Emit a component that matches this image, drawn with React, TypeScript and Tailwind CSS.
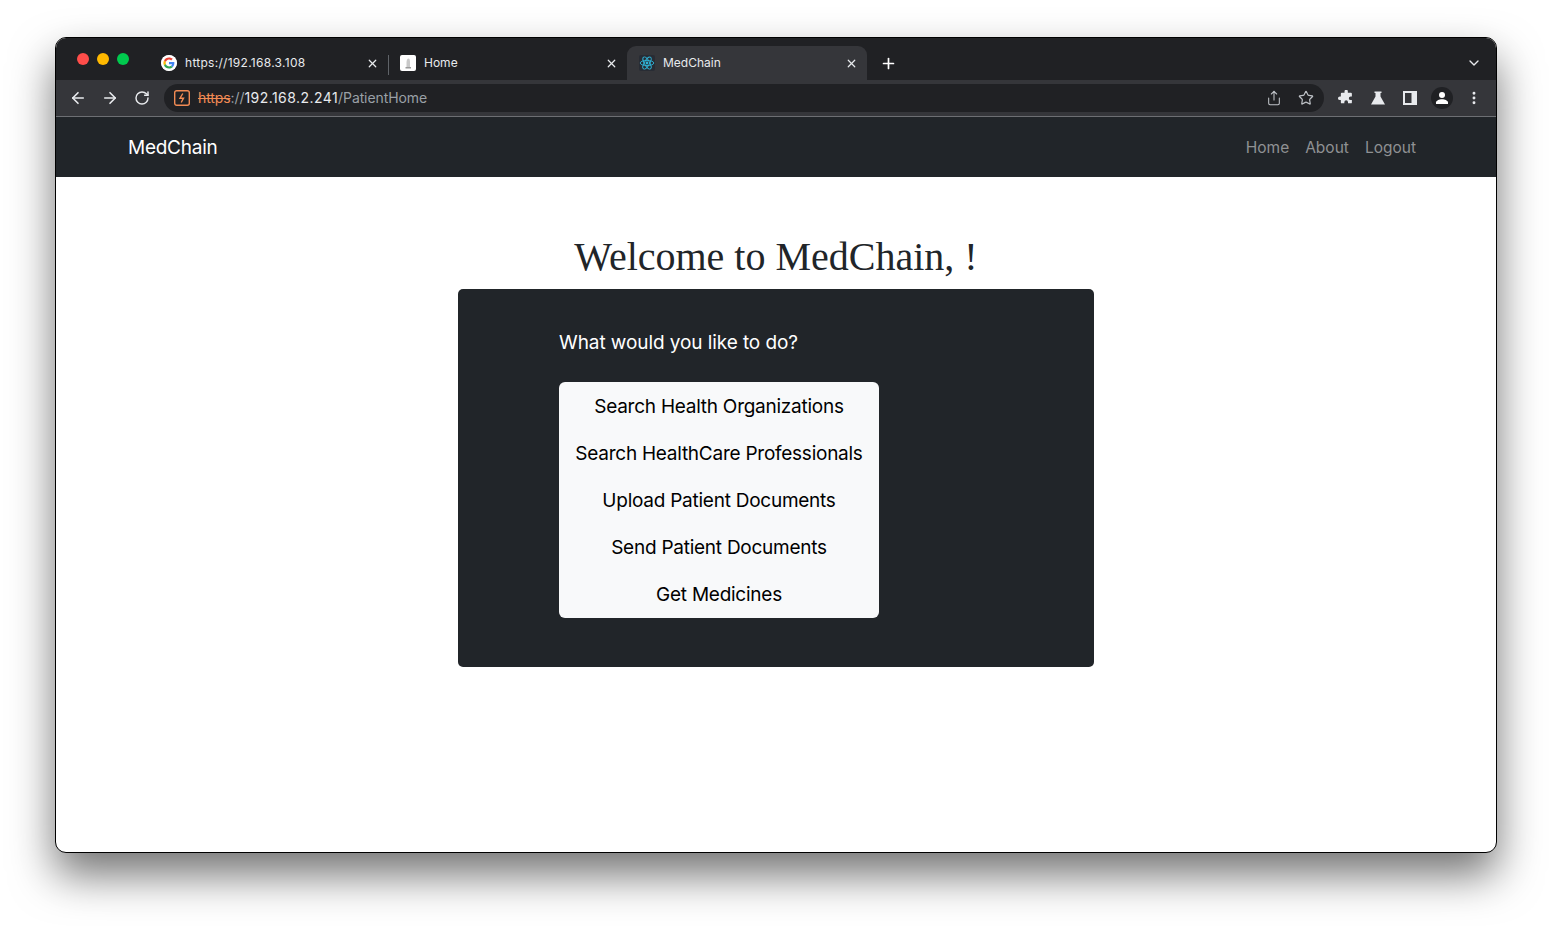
import { ArrowLeft, ArrowRight, ChevronDown, MoreVertical, Plus, RotateCw, Share, Star, X } from "lucide-react"

const ui = "font-['Inter',sans-serif]"

const menuItems = [
  "Search Health Organizations",
  "Search HealthCare Professionals",
  "Upload Patient Documents",
  "Send Patient Documents",
  "Get Medicines",
]

const GoogleIcon = () => (
  <svg width="16" height="16" viewBox="0 0 48 48" className="rounded-full bg-white">
    <circle cx="24" cy="24" r="24" fill="#fff" />
    <g transform="translate(7.2 7.2) scale(.7)">
      <path fill="#EA4335" d="M24 9.5c3.5 0 6.7 1.2 9.2 3.600l6.900-6.900C35.900 2.400 30.400 0 24 0 14.600 0 6.500 5.400 2.600 13.200l8 6.200C12.500 13.600 17.800 9.500 24 9.500z" />
      <path fill="#4285F4" d="M47 24.500c0-1.600-.1-3.100-.4-4.500H24v9h12.900c-.6 3-2.200 5.500-4.700 7.200l7.700 6C44.400 38.100 47 31.900 47 24.500z" />
      <path fill="#FBBC05" d="M10.600 28.600c-.5-1.400-.8-3-.8-4.600s.3-3.200.8-4.600l-8-6.200C1 16.500 0 20.100 0 24s1 7.500 2.600 10.800l8-6.200z" />
      <path fill="#34A853" d="M24 48c6.500 0 11.900-2.100 15.900-5.800l-7.700-6c-2.100 1.400-4.900 2.300-8.200 2.300-6.200 0-11.500-4.200-13.400-9.800l-8 6.200C6.500 42.600 14.600 48 24 48z" />
    </g>
  </svg>
)

const HomeFavicon = () => (
  <svg width="16" height="16" viewBox="0 0 16 16">
    <rect width="16" height="16" rx="2" fill="#fff" />
    <path d="M6.500 12.500V7.500C6.500 5 7.500 3.500 8.500 3.500S10 5 10 7.500v5z" fill="#c9c9c9" />
    <rect x="5.500" y="12" width="5.500" height="1.500" fill="#9a9a9a" />
  </svg>
)

const ReactFavicon = () => (
  <svg width="16" height="16" viewBox="0 0 16 16">
    <rect width="16" height="16" rx="2" fill="#282c34" />
    <circle cx="8" cy="8" r="1.400" fill="#2fb4d8" />
    <g fill="none" stroke="#2fb4d8" strokeWidth=".9">
      <ellipse cx="8" cy="8" rx="6.800" ry="2.600" />
      <ellipse cx="8" cy="8" rx="6.800" ry="2.600" transform="rotate(60 8 8)" />
      <ellipse cx="8" cy="8" rx="6.800" ry="2.600" transform="rotate(120 8 8)" />
    </g>
  </svg>
)

const Tab = ({ icon, title, active, width, titleClass }: any) => (
  <div className={`flex items-center pl-3 pr-[9px] ${width} ${active ? "h-[38px] self-start rounded-t-[9px] bg-[#35363a] pb-1" : "h-[34px] self-start"}`}>
    {icon}
    <span className={`ml-2 flex-1 text-xs text-[#e8eaed] ${titleClass ?? ""}`}>{title}</span>
    <X size={13} strokeWidth={2.2} className="text-[#e8eaed]" />
  </div>
)

const Toolbar = () => (
  <div className="flex h-9 items-center bg-[#35363a] pl-[13px] pr-3">
    <ArrowLeft size={18} strokeWidth={2.2} className="text-[#e8eaed]" />
    <ArrowRight size={18} strokeWidth={2.2} className="ml-[14px] text-[#e8eaed]" />
    <RotateCw size={16} strokeWidth={2.2} className="ml-[15px] text-[#e8eaed]" />
    <div className="ml-[14px] flex h-7 w-[1160px] items-center rounded-full bg-[#202124] pl-[10px] pr-[10px]">
      <svg width="16" height="16" viewBox="0 0 16 16" fill="none" stroke="#f28b54" strokeWidth="1.400">
        <rect x=".7" y=".7" width="14.600" height="14.600" rx="2" />
        <path d="M8.800 3.500 6 8.200h3.500L7.200 12.500" />
      </svg>
      <span className="ml-2 text-sm tracking-[-.1px] text-[#9aa0a6]">
        <span className="text-[#f28b54] line-through">https</span>://<span className="tracking-[.45px] text-[#e8eaed]">192.168.2.241</span>/PatientHome
      </span>
      <div className="flex-1" />
      <Share size={16} strokeWidth={1.6} className="text-[#bdc1c6]" />
      <Star size={16} strokeWidth={1.8} className="ml-4 text-[#bdc1c6]" />
    </div>
    <div className="ml-[14px] flex items-center">
      <svg width="16" height="16" viewBox="0 0 16 16" fill="#e8eaed">
        <path d="M6 1.500a1.800 1.800 0 0 1 3.600 0V3H13a1 1 0 0 1 1 1v3h-1.300a2 2 0 0 0 0 4H14v2.500a1 1 0 0 1-1 1H9.800v-1.300a2 2 0 0 0-4 0v1.300H3a1 1 0 0 1-1-1V11H.9a2 2 0 0 1 0-4H2V4a1 1 0 0 1 1-1h3z" transform="translate(1 0) scale(.92)" />
      </svg>
      <svg width="16" height="16" viewBox="0 0 16 16" fill="#e8eaed" className="ml-4">
        <path d="M4.500 1.500h7v1.500h-1v3.500L15 14.500H1L5.500 6.500V3h-1z" />
      </svg>
      <svg width="14" height="14" viewBox="0 0 14 14" className="ml-[17px]">
        <rect width="14" height="14" fill="#e8eaed" />
        <rect x="2" y="2" width="6.500" height="10" fill="#35363a" />
      </svg>
      <div className="ml-[14px] flex h-[22px] w-[22px] items-center justify-center rounded-full bg-[#202124]">
        <svg width="14" height="14" viewBox="0 0 14 14" fill="#fff">
          <circle cx="7" cy="4" r="3" />
          <path d="M1 13v-1.500C1 9.500 4 8.200 7 8.200s6 1.300 6 3.300V13z" />
        </svg>
      </div>
      <MoreVertical size={16} strokeWidth={2.4} className="ml-[13px] text-[#e8eaed]" />
    </div>
  </div>
)

const BrowserChrome = () => (
  <div className={ui}>
    <div className="relative flex h-[42px] items-start bg-[#202124] pl-[93px] pt-2">
      <div className="absolute left-[21px] top-[15px] flex gap-2">
        <span className="h-3 w-3 rounded-full bg-[#ff4d4a]" />
        <span className="h-3 w-3 rounded-full bg-[#ffb900]" />
        <span className="h-3 w-3 rounded-full bg-[#00ca4e]" />
      </div>
      <Tab icon={<GoogleIcon />} title="https://192.168.3.108" width="w-[239px]" titleClass="tracking-[.28px]" />
      <div className="mt-[9px] h-5 w-px bg-[#5f6368]" />
      <div className="-ml-px flex">
        <Tab icon={<HomeFavicon />} title="Home" width="w-[239px]" />
      </div>
      <Tab icon={<ReactFavicon />} title="MedChain" active width="relative z-10 w-[240px]" />
      <Plus size={17} strokeWidth={2.4} className="ml-[13px] mt-[9px] text-white" />
      <div className="flex-1" />
      <ChevronDown size={16} strokeWidth={2} className="mr-[14px] mt-[9px] text-[#e8eaed]" />
    </div>
    <Toolbar />
    <div className="h-px bg-[#6d6f73]" />
  </div>
)

const Navbar = () => (
  <nav className={`${ui} flex h-[60px] items-center bg-[#212529] pl-[72px] pr-[80px] pt-[2px]`}>
    <span className="flex-1 text-[19px] tracking-[-.25px] text-white">MedChain</span>
    <div className="flex gap-4 text-[15.5px] text-[#8f9193]">
      <span>Home</span>
      <span>About</span>
      <span>Logout</span>
    </div>
  </nav>
)

export default function App() {
  return (
    <div className="h-[926px] w-[1552px] overflow-hidden bg-white pl-[55px] pt-[37px]">
      <div className="flex h-[816px] w-[1442px] flex-col overflow-hidden rounded-[11px] border border-black bg-white shadow-[0_22px_44px_rgba(0,0,0,.55)]">
        <BrowserChrome />
        <Navbar />
        <main className="flex flex-1 flex-col items-center">
          <h1 className="mt-[56px] h-[56px] font-['Liberation_Serif',serif] text-[40px] leading-[48px] text-[#212529]">Welcome to MedChain, !</h1>
          <div className={`${ui} h-[378px] w-[636px] rounded-[5px] bg-[#212529] pl-[101px] pt-[39px]`}>
            <p className="text-[19px] leading-[30px] tracking-[-.08px] text-white">What would you like to do?</p>
            <ul className="mt-[24px] w-[320px] rounded-md bg-[#f8f9fa] pt-px text-center text-[19px] tracking-[-.25px] text-black">
              {menuItems.map((item) => (
                <li key={item} className="flex h-[47px] items-center justify-center pt-[2px]">{item}</li>
              ))}
            </ul>
          </div>
        </main>
      </div>
    </div>
  )
}
